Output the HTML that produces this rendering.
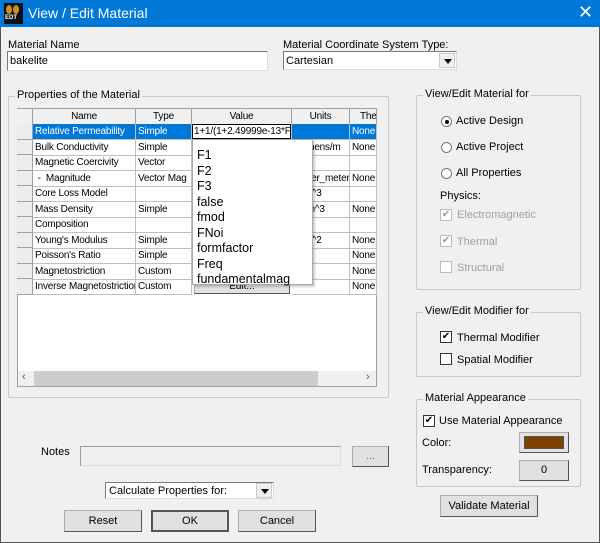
<!DOCTYPE html>
<html><head><meta charset="utf-8"><style>
*{box-sizing:border-box;margin:0;padding:0}
body{width:600px;height:543px;background:#f0f0f0;font-family:"Liberation Sans",sans-serif;font-size:11px;color:#000;position:relative;overflow:hidden}
.a{position:absolute;white-space:nowrap}
.win{position:absolute;left:0;top:0;width:600px;height:543px;border:1px solid #555;border-top:none}
.title{position:absolute;left:0;top:0;width:600px;height:27px;background:#0078d7;color:#fff;font-size:14px}
.inp{position:absolute;background:#fff;border:1px solid #7a7a7a;border-right-color:#ddd;border-bottom-color:#ddd}
.grp{position:absolute;border:1px solid #c8c8c8;border-radius:2px}
.grp>span{position:absolute;top:-8px;left:6px;background:#f0f0f0;padding:0 2px;font-size:11px;white-space:nowrap}
.btn{position:absolute;background:#e1e1e1;border:1px solid #adadad;border-right-color:#555;border-bottom-color:#555;text-align:center;font-size:11px}
.cell{position:absolute;height:16px;line-height:15px;border-right:1px solid #c0c0c0;border-bottom:1px solid #c0c0c0;padding-left:2px;font-size:10px;letter-spacing:-0.2px;overflow:hidden;white-space:nowrap}
.hdr{background:#f0f0f0;border-right:1px solid #a0a0a0;border-bottom:1px solid #a0a0a0;text-align:center;padding:0}
.rh{background:#ececec;border-right:1px solid #a0a0a0;border-bottom:1px solid #a0a0a0;left:17px;width:16px;padding:0;height:15px}
.sel{background:#0078d7;color:#fff}
.rad{position:absolute;width:11px;height:11px;border-radius:50%;border:1px solid #777;background:#fff}
.chk{position:absolute;width:12px;height:12px;border:1px solid #333;background:#fff;font-size:10px;line-height:10px;text-align:center}
.dis{border-color:#bbb;color:#999}
.arrow{position:absolute;width:16px;height:15px;background:#f0f0f0;border:1px solid #ccc}
.arrow:after{content:"";position:absolute;left:4px;top:5px;border-left:4px solid transparent;border-right:4px solid transparent;border-top:5px solid #000}
</style></head><body>
<div class="win"></div>
<div class="title">
 <div class="a" style="left:4px;top:3px;width:19px;height:21px;background:#111"></div>
 <div class="a" style="left:6px;top:5px;width:6px;height:9px;border-radius:50%;background:#c8902a"></div>
 <div class="a" style="left:13px;top:5px;width:6px;height:9px;border-radius:50%;background:#c8902a"></div>
 <div class="a" style="left:5px;top:15px;font-size:6px;color:#fff;font-weight:bold">EDT</div>
 <div class="a" style="left:28px;top:5px">View / Edit Material</div>
 <div class="a" style="left:578px;top:2px;font-size:18px">✕</div>
</div>

<div class="a" style="left:8px;top:39px">Material Name</div>
<div class="inp" style="left:7px;top:51px;width:261px;height:20px"><span class="a" style="left:2px;top:3px">bakelite</span></div>
<div class="a" style="left:283px;top:39px">Material Coordinate System Type:</div>
<div class="inp" style="left:283px;top:51px;width:174px;height:19px"><span class="a" style="left:2px;top:3px">Cartesian</span><div class="arrow" style="right:1px;top:1px"></div></div>

<div class="grp" style="left:8px;top:96px;width:381px;height:302px"><span>Properties of the Material</span></div>
<div class="a" style="left:17px;top:108px;width:360px;height:279px;background:#fff;border:1px solid #a0a0a0"></div>
<div class="cell hdr" style="left:17px;top:109px;width:16px"></div>
<div class="cell hdr" style="left:33px;top:109px;width:103px">Name</div>
<div class="cell hdr" style="left:136px;top:109px;width:56px">Type</div>
<div class="cell hdr" style="left:192px;top:109px;width:100px">Value</div>
<div class="cell hdr" style="left:292px;top:109px;width:58px">Units</div>
<div class="cell hdr" style="left:350px;top:109px;width:27px;text-align:left;padding-left:10px">Ther</div>

<div class="cell rh" style="top:124px;height:16px"></div>
<div class="cell rh" style="top:140px"></div>
<div class="cell rh" style="top:155px;height:16px"></div>
<div class="cell rh" style="top:171px"></div>
<div class="cell rh" style="top:186px;height:16px"></div>
<div class="cell rh" style="top:202px"></div>
<div class="cell rh" style="top:217px;height:16px"></div>
<div class="cell rh" style="top:233px"></div>
<div class="cell rh" style="top:248px;height:16px"></div>
<div class="cell rh" style="top:264px"></div>
<div class="cell rh" style="top:279px;height:16px"></div>

<div class="cell sel" style="left:33px;top:124px;width:103px">Relative Permeability</div>
<div class="cell sel" style="left:136px;top:124px;width:56px">Simple</div>
<div class="cell sel" style="left:192px;top:124px;width:100px"></div>
<div class="a" style="left:192px;top:124px;width:99px;height:15px;background:#fff;border:1px solid #000;font-size:10px;letter-spacing:-0.2px;line-height:13px;padding-left:1px;overflow:hidden">1+1/(1+2.49999e-13*F</div>
<div class="cell sel" style="left:292px;top:124px;width:58px"></div>
<div class="cell sel" style="left:350px;top:124px;width:27px">None</div>

<div class="cell" style="left:33px;top:140px;width:103px">Bulk Conductivity</div><div class="cell" style="left:136px;top:140px;width:56px">Simple</div><div class="cell" style="left:292px;top:140px;width:58px">siemens/m</div><div class="cell" style="left:350px;top:140px;width:27px">None</div>
<div class="cell" style="left:33px;top:155px;width:103px">Magnetic Coercivity</div><div class="cell" style="left:136px;top:155px;width:56px">Vector</div><div class="cell" style="left:292px;top:155px;width:58px"></div><div class="cell" style="left:350px;top:155px;width:27px"></div>
<div class="cell" style="left:33px;top:171px;width:103px">&nbsp;- &nbsp;Magnitude</div><div class="cell" style="left:136px;top:171px;width:56px">Vector Mag</div><div class="cell" style="left:292px;top:171px;width:58px">A_per_meter</div><div class="cell" style="left:350px;top:171px;width:27px">None</div>
<div class="cell" style="left:33px;top:186px;width:103px">Core Loss Model</div><div class="cell" style="left:136px;top:186px;width:56px"></div><div class="cell" style="left:292px;top:186px;width:58px">w/m^3</div><div class="cell" style="left:350px;top:186px;width:27px"></div>
<div class="cell" style="left:33px;top:202px;width:103px">Mass Density</div><div class="cell" style="left:136px;top:202px;width:56px">Simple</div><div class="cell" style="left:292px;top:202px;width:58px">kg/m^3</div><div class="cell" style="left:350px;top:202px;width:27px">None</div>
<div class="cell" style="left:33px;top:217px;width:103px">Composition</div><div class="cell" style="left:136px;top:217px;width:56px"></div><div class="cell" style="left:292px;top:217px;width:58px"></div><div class="cell" style="left:350px;top:217px;width:27px"></div>
<div class="cell" style="left:33px;top:233px;width:103px">Young's Modulus</div><div class="cell" style="left:136px;top:233px;width:56px">Simple</div><div class="cell" style="left:292px;top:233px;width:58px">N/m^2</div><div class="cell" style="left:350px;top:233px;width:27px">None</div>
<div class="cell" style="left:33px;top:248px;width:103px">Poisson's Ratio</div><div class="cell" style="left:136px;top:248px;width:56px">Simple</div><div class="cell" style="left:292px;top:248px;width:58px"></div><div class="cell" style="left:350px;top:248px;width:27px">None</div>
<div class="cell" style="left:33px;top:264px;width:103px">Magnetostriction</div><div class="cell" style="left:136px;top:264px;width:56px">Custom</div><div class="cell" style="left:292px;top:264px;width:58px"></div><div class="cell" style="left:350px;top:264px;width:27px">None</div>
<div class="cell" style="left:33px;top:279px;width:103px">Inverse Magnetostriction</div><div class="cell" style="left:136px;top:279px;width:56px">Custom</div><div class="cell" style="left:292px;top:279px;width:58px"></div><div class="cell" style="left:350px;top:279px;width:27px">None</div>
<div class="cell" style="left:192px;top:140px;width:100px;height:139px"></div>
<div class="btn" style="left:194px;top:280px;width:96px;height:14px;font-size:10px;line-height:12px">Edit...</div>

<div class="a" style="left:192px;top:139px;width:121px;height:146px;background:#fff;border:1px solid #aaa;box-shadow:2px 2px 2px rgba(0,0,0,.2);font-size:12.5px;line-height:15.5px;padding:8px 0 0 4px;white-space:normal">F1<br>F2<br>F3<br>false<br>fmod<br>FNoi<br>formfactor<br>Freq<br>fundamentalmag</div>

<div class="a" style="left:18px;top:371px;width:358px;height:15px;background:#f0f0f0"></div>
<div class="a" style="left:34px;top:371px;width:284px;height:15px;background:#cdcdcd"></div>
<div class="a" style="left:22px;top:371px;font-size:11px;color:#555">‹</div>
<div class="a" style="left:366px;top:371px;font-size:11px;color:#555">›</div>

<div class="grp" style="left:416px;top:95px;width:165px;height:195px"><span>View/Edit Material for</span></div>
<div class="rad" style="left:441px;top:116px"><div class="a" style="left:2.5px;top:2.5px;width:4px;height:4px;border-radius:50%;background:#000"></div></div>
<div class="a" style="left:456px;top:115px">Active Design</div>
<div class="rad" style="left:441px;top:142px"></div><div class="a" style="left:456px;top:141px">Active Project</div>
<div class="rad" style="left:441px;top:168px"></div><div class="a" style="left:456px;top:167px">All Properties</div>
<div class="a" style="left:440px;top:190px">Physics:</div>
<div class="chk dis" style="left:440px;top:209px">✔</div><div class="a" style="left:457px;top:209px;color:#a0a0a0">Electromagnetic</div>
<div class="chk dis" style="left:440px;top:235px">✔</div><div class="a" style="left:457px;top:236px;color:#a0a0a0">Thermal</div>
<div class="chk dis" style="left:440px;top:261px"></div><div class="a" style="left:457px;top:262px;color:#a0a0a0">Structural</div>

<div class="grp" style="left:416px;top:312px;width:165px;height:65px"><span>View/Edit Modifier for</span></div>
<div class="chk" style="left:440px;top:331px">✔</div><div class="a" style="left:457px;top:332px">Thermal Modifier</div>
<div class="chk" style="left:440px;top:353px"></div><div class="a" style="left:457px;top:354px">Spatial Modifier</div>

<div class="grp" style="left:416px;top:399px;width:165px;height:88px"><span>Material Appearance</span></div>
<div class="chk" style="left:423px;top:415px">✔</div><div class="a" style="left:439px;top:415px">Use Material Appearance</div>
<div class="a" style="left:422px;top:437px">Color:</div>
<div class="btn" style="left:519px;top:432px;width:50px;height:21px"><div class="a" style="left:4px;top:3px;width:40px;height:13px;background:#7f3f00;border:1px solid #555"></div></div>
<div class="a" style="left:422px;top:464px">Transparency:</div>
<div class="btn" style="left:519px;top:460px;width:50px;height:21px;line-height:19px">0</div>
<div class="btn" style="left:440px;top:495px;width:98px;height:22px;line-height:20px">Validate Material</div>

<div class="a" style="left:41px;top:446px">Notes</div>
<div class="inp" style="left:80px;top:446px;width:261px;height:20px;background:#f0f0f0;border-color:#999 #ddd #ddd #999"></div>
<div class="btn" style="left:352px;top:446px;width:37px;height:21px;line-height:18px;color:#777">...</div>
<div class="inp" style="left:105px;top:482px;width:169px;height:17px"><span class="a" style="left:3px;top:2px">Calculate Properties for:</span><div class="arrow" style="right:1px;top:0px;height:15px"></div></div>
<div class="btn" style="left:64px;top:510px;width:78px;height:22px;line-height:20px">Reset</div>
<div class="btn" style="left:151px;top:510px;width:78px;height:22px;line-height:18px;border:2px solid #555">OK</div>
<div class="btn" style="left:238px;top:510px;width:78px;height:22px;line-height:20px">Cancel</div>
</body></html>
